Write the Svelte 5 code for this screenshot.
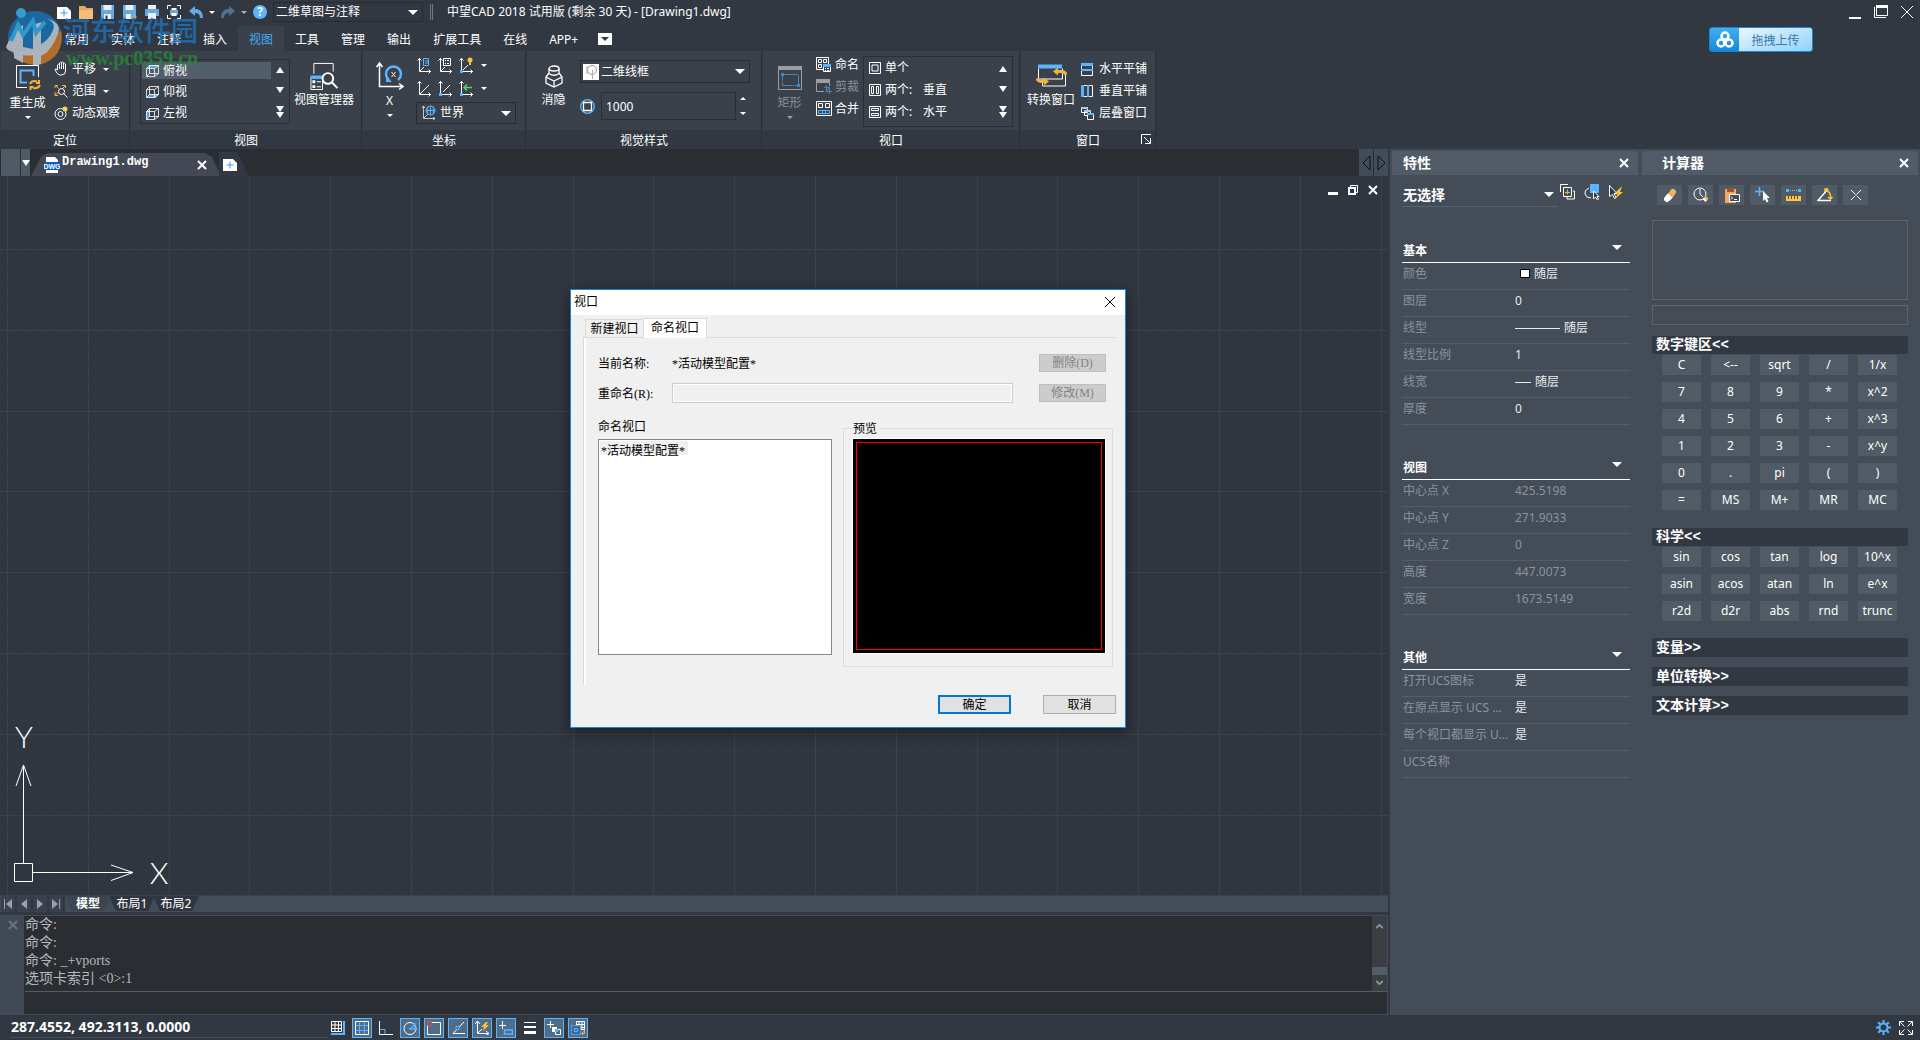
<script>
	const quick = ['new', 'open', 'save', 'saveAs', 'print', 'preview'];
	const menus = ['常用', '实体', '注释', '插入', '视图', '工具', '管理', '输出', '扩展工具', '在线', 'APP+'];
	let menu = $state('视图');

	const views = [
		['俯视', 'cubeTop'],
		['仰视', 'cubeBottom'],
		['左视', 'cubeLeft']
	];
	let view = $state('俯视');

	const layouts = [
		['单个', '', 'one'],
		['两个:', '垂直', 'twoV'],
		['两个:', '水平', 'twoH']
	];

	const groups = [
		{
			title: '基本',
			rows: [
				['颜色', '随层', 'swatch'],
				['图层', '0'],
				['线型', '随层', 'long'],
				['线型比例', '1'],
				['线宽', '随层', 'short'],
				['厚度', '0']
			]
		},
		{
			title: '视图',
			muted: true,
			rows: [
				['中心点 X', '425.5198'],
				['中心点 Y', '271.9033'],
				['中心点 Z', '0'],
				['高度', '447.0073'],
				['宽度', '1673.5149']
			]
		},
		{
			title: '其他',
			rows: [
				['打开UCS图标', '是'],
				['在原点显示 UCS ...', '是'],
				['每个视口都显示 U...', '是'],
				['UCS名称', '']
			]
		}
	];

	const calcTools = [
		['eraser', '清除'],
		['history', '清除历史'],
		['paste', '粘贴到命令行'],
		['pick', '获取坐标'],
		['ruler', '两点距离'],
		['angle', '两点角度'],
		['cross', '交点']
	];
	const numKeys = ['C', '<--', 'sqrt', '/', '1/x', '7', '8', '9', '*', 'x^2', '4', '5', '6', '+', 'x^3',
		'1', '2', '3', '-', 'x^y', '0', '.', 'pi', '(', ')', '=', 'MS', 'M+', 'MR', 'MC'];
	const sciKeys = ['sin', 'cos', 'tan', 'log', '10^x', 'asin', 'acos', 'atan', 'ln', 'e^x', 'r2d', 'd2r', 'abs', 'rnd', 'trunc'];

	const log = ['命令:', '命令:', '命令: _+vports', '选项卡索引 <0>:1'];

	const modes = [
		['snap', '捕捉', false],
		['grid', '栅格', true],
		['ortho', '正交', false],
		['polar', '极轴', true],
		['osnap', '对象捕捉', true],
		['otrack', '对象追踪', true],
		['ducs', '动态UCS', true],
		['dyn', '动态输入', true],
		['lwt', '线宽', false],
		['cycle', '循环选择', true],
		['space', '模型空间', true]
	];

	// major grid lines; four faint ones stand between each pair
	const step = 80.8;
	const lines = Array.from({ length: 200 }, (_, i) => ({
		at: Math.round((i - 5) * (step / 5)) + 0.5,
		major: i % 5 === 0
	}));

	const axes = '<path d="M3.5 1v13.5H15M1.5 3.5l2-2 2 2M12.5 12.5l2 2-2 2"/>';
	const w = 'stroke="#fff" fill="none"';
	const b = 'stroke="#5ab4ff" fill="none"';
	const y = 'stroke="#f0b43c" fill="none"';

	const icons = {
		new: '<path fill="#fff" d="M0 3h10l4 4v8H0z"/><path d="M7 5.500v7M3.500 9h7" stroke="#3a9be8"/>',
		open: '<path fill="#e6a95c" d="M0 2h6l1.500 2H14v11H0z"/><path fill="#f6bd78" d="M0 6h14v9H0z"/>',
		save: '<path fill="#66a8e0" d="M0 1h13v14H0z"/><path fill="#e8f1fa" d="M2.500 1h8v5h-8zM3 10h7v5H3z"/><path fill="#323842" d="M4.500 11.500h2V15h-2z"/>',
		saveAs: '<path fill="#66a8e0" d="M0 1h13v14H0z"/><path fill="#e8f1fa" d="M2.500 1h8v5h-8zM3 10h5v5H3z"/><path d="M7 13h6M11 11l2.500 2-2.500 2" stroke="#e8b04a" fill="none"/>',
		print: '<path fill="#e8f1fa" d="M3 1h8v4H3zM3 9h8v6H3z"/><path fill="#66a8e0" d="M0 5h14v7h-3V9H3v3H0z"/>',
		preview: `<path ${w} d="M.5 5V1.500H4M10 1.500h3.500V5M13.500 11v3.500H10M4 14.500H.5V11"/><path fill="#66a8e0" d="M3 6h8v5H3z"/><path fill="#fff" d="M4.500 4h5v2h-5zM4.500 9h5v3h-5z"/>`,
		undo: '<path fill="#66a8e0" d="M0 7l6-5v3q8 0 8 9h-3q0-5-5-5v3z"/>',
		redo: '<path fill="#4e7194" d="M14 7L8 2v3Q0 5 0 14h3q0-5 5-5v3z"/>',
		regen: `<path ${w} d="M12 23.500H1.500V1.500h22V13"/><path ${b} stroke-width="2" d="M12 18.500H5.500v-12h13V12"/><path ${y} stroke-width="2" d="M15 20q2-4 7-2.500M24 16v3h-3M25 21q-2 4-7 3M15.500 26v-3h3"/>`,
		pan: `<path ${w} d="M3.500 9V4q1-1.500 2 0V2q1-1.500 2 0v-.5q1-1.500 2 0V3q1-1.500 2 0v7q0 4-4 4H6q-2 0-3-2L.8 8.500q1-1.500 2.700.5M5.500 4v4M7.500 2v6M9.500 3v5"/>`,
		extents: `<path ${y} d="M1 4V1.500h3M1.500 1.500l3 3M8 1.500h3.500V4M11 2L8 5M1 8v3.500h3M1.500 11l3-3"/><circle cx="7.500" cy="7.500" r="3" ${w}/><path ${w} d="M9.500 9.500l4 4"/>`,
		orbit: `<circle cx="6.500" cy="8" r="5.500" ${w}/><circle cx="6.500" cy="8" r="2.500" ${w}/><circle cx="11" cy="3" r="2.500" fill="#f3d46b"/>`,
		cubeTop: `<path fill="#5a9fdc" d="M4 1h9l-3 3H1z"/><path ${w} stroke-opacity=".8" d="M.5 4.500h8v8h-8zM3.500 1.500h9v8h-9zM.5 4.500l3-3M8.500 4.500l4-3M.5 12.500l3-3M8.500 12.500l4-3"/>`,
		cubeBottom: `<path fill="#5a9fdc" d="M3 9h10l-3 4H1z"/><path ${w} stroke-opacity=".8" d="M.5 4.500h8v8h-8zM3.500 1.500h9v8h-9zM.5 4.500l3-3M8.500 4.500l4-3M.5 12.500l3-3M8.500 12.500l4-3"/>`,
		cubeLeft: `<path fill="#5a9fdc" d="M.5 4.500l3-3v8l-3 3z"/><path ${w} stroke-opacity=".8" d="M.5 4.500h8v8h-8zM3.500 1.500h9v8h-9zM.5 4.500l3-3M8.500 4.500l4-3M.5 12.500l3-3M8.500 12.500l4-3"/>`,
		viewMgr: `<path ${w} d="M4.500 12V1.500h20V10"/><path ${w} d="M1.500 16v12.500h12V16"/><path fill="#5ab4ff" d="M1 14h13v3.500H1z"/><path fill="#fff" d="M3 19h3v3H3zM3 24h3v3H3zM7.500 20H12v1H7.500zM7.500 25H12v1H7.500z"/><circle cx="19" cy="17" r="5.500" ${w} stroke-width="2"/><path d="M23 21l6 6" stroke="#fff" stroke-width="2"/>`,
		rotX: `<path ${w} stroke-width="1.500" d="M3.500 1v23.500H27M.5 5l3-4 3 4M23 21.500l4 3-4 3"/><path d="M13 18a7.500 7.500 0 1 1 9 0" stroke="#5ab4ff" stroke-width="2.500" fill="none"/><path fill="#5ab4ff" d="M10 14v6h6z"/><path d="M15.500 10l4 5M19.500 10l-4 5" stroke="#fff"/>`,
		ucs1: `<g ${w}>${axes}<path d="M4 14l4-4"/></g><path ${b} d="M7.500 1.500h5v7h-5zM9 4h3M9 6h3"/>`,
		ucs2: `<g ${w}>${axes}<path d="M4 14l4-4M6.500 1.500h7v7h-7zM8 3.500h1M10 3.500h2M8 6.500h1M10 6.500h2"/></g>`,
		ucs3: `<g ${w}>${axes}<path d="M4 14l6-6"/></g><circle cx="12" cy="3" r="2.500" fill="#f7c344"/><path fill="#f7c344" d="M11 5h2v3h-2z"/><path fill="#5ab4ff" d="M2 13h3v3H2z"/>`,
		ucs4: `<g ${w}>${axes}<path d="M4 14l9-9"/></g>`,
		ucs5: `<g ${w}>${axes}<path d="M6 12l7-7"/></g><path fill="#5ab4ff" d="M2 13h3v3H2z"/>`,
		ucs6: `<g ${w}>${axes}</g><path d="M6 7.500h8M9 4.500l-3 3 3 3" stroke="#5fd068" stroke-width="1.500" fill="none"/><path fill="#5ab4ff" d="M2 13h3v3H2z"/>`,
		globe: `<path ${w} stroke-opacity=".7" d="M2.500 1v12.500H14M1 3l1.500-2L4 3M12 12l2 1.500-2 1.500M3 13l4-4"/><circle cx="9.500" cy="5.500" r="4.500" ${b}/><path ${b} d="M5 5.500h9M9.500 1v9M7 1.500q-1 4 0 8M12 1.500q1 4 0 8"/>`,
		hide: `<ellipse cx="9" cy="3.500" rx="5" ry="2.500" ${w} stroke-width="1.300"/><path ${w} stroke-width="1.300" d="M4 3.500v5q5 3.500 10 0v-5M4 8l-3 4v6l8 4 8-4v-6l-3-4M1 12l8 4 8-4M9 16v6"/>`,
		frame: '<path fill="#fff" d="M0 0h16v16H0z"/><circle cx="9" cy="6" r="4.500" stroke="#999" fill="none"/><path d="M9.500 6v9M4 2v8" stroke="#aaa"/>',
		facet: `<circle cx="7.500" cy="7.500" r="6.800" ${b} stroke-width="1.300"/><path ${w} stroke-width="1.300" d="M3.500 3.500h8v8h-8z"/>`,
		rect: '<path stroke="#9a9ea4" fill="none" d="M.5 1.500h23v22H.5z"/><path fill="#9a9ea4" d="M0 0h24v4H0z"/><path stroke="#4a83b5" fill="none" stroke-dasharray="15 1" d="M4.500 8.500h16v11h-16z"/><path fill="#4a83b5" d="M3 7h3v3H3zM19 18h3v3h-3z"/>',
		vpName: `<path ${w} d="M.5 .5h12v12H.5zM2.500 2.500h3v3h-3zM7.500 2.500h3v3h-3zM2.500 7.500h3v3h-3z"/><path fill="#3a414a" d="M7 7h9v9H7z"/><path ${w} d="M7.500 7.500h7v7h-7z"/><path fill="#5ab4ff" d="M7 7h8v3H7z"/><path fill="#fff" d="M9 11h1v1H9zM11 11h2v1h-2zM9 13h1v1H9zM11 13h2v1h-2z"/>`,
		vpClip: '<path stroke="#9a9ea4" fill="none" d="M.5 1.500h13V7M.5 1.500v11H8"/><path fill="#9a9ea4" d="M0 0h14v4H0z"/><path stroke="#4a83b5" fill="none" d="M10.500 6v6.500H16M8 8.500h5.500V15M9 14l5-6"/>',
		vpJoin: `<path ${w} d="M.5 .5h15v14H.5zM2.500 2.500h4v4h-4zM9.500 2.500h4v4h-4z"/><path ${b} d="M2.500 9.500h11v3h-11zM6.500 9v4M9.500 9v4"/>`,
		one: `<path ${w} d="M.5 .5h11v11H.5zM3 3h6v6H3z"/>`,
		twoV: `<path ${w} d="M.5 .5h11v11H.5zM2.500 2.500h2v7h-2zM7.500 2.500h2v7h-2z"/>`,
		twoH: `<path ${w} d="M.5 .5h11v11H.5zM2.500 2.500h7v2h-7zM2.500 7.500h7v2h-7z"/>`,
		swap: `<path ${w} d="M2.500 4v10.500h24V4M6.500 15v6.500h23V9"/><path fill="#5ab4ff" d="M2 0h24v4H2z"/><path d="M20 7h5q4 0 5 3" stroke="#f0b43c" stroke-width="3" fill="none"/><path fill="#f0b43c" d="M17 7l5-4v8z"/><path d="M10 17H6q-4 0-5-3" stroke="#f0b43c" stroke-width="3" fill="none"/><path fill="#f0b43c" d="M13 17l-5-4v8z"/>`,
		tileH: `<path ${w} d="M.5 1.500h11v11H.5z"/><path fill="#5ab4ff" d="M0 0h12v3H0zM0 6h12v2H0z"/>`,
		tileV: `<path ${w} d="M1.500 .5h10v11h-10z"/><path fill="#5ab4ff" d="M0 0h3v12H0zM6 0h2v12H6z"/>`,
		cascade: `<path ${w} d="M.5 1.500h6v4h-6zM3.500 4.500h6v4h-6z"/><path fill="#3a414a" d="M6 7h7v6H6z"/><path ${w} d="M6.500 7.500h6v5h-6z"/><path fill="#a5cdf0" d="M0 0h7v2H0zM3 3h7v2H3z"/><path fill="#5ab4ff" d="M6 6h7v2H6z"/>`,
		launcher: `<path ${w} d="M.5 10V.5H10M3 3l6 6M9.500 4v5.500H4"/>`,
		quickSel: `<path ${w} d="M.5 8V.5H8M3.500 3.500h8v9h-8zM13 7h1.500v8H7v-2"/><path ${y} d="M7.500 5.500v5M5 8.500h5"/>`,
		selObj: `<path fill="#5ab4ff" d="M6 0h9v9H6z"/><path ${w} d="M5 4q-5 2-4 6t6 4"/><path fill="#323842" stroke="#fff" d="M9.500 7v8l2-2 2 3 1-1-1.500-2.500h2z"/>`,
		toggle: `<path fill="#323842" stroke="#fff" d="M1.500 1.500v11l3-2 2 4 1.500-1-2-4h3z"/><path fill="#ffc52e" d="M14 2L7 9h3l-3 6 8-7h-3z"/>`,
		eraser: '<path d="M5 12l3-3" stroke="#fff" stroke-width="6" stroke-linecap="round"/><path d="M8 9l3-4" stroke="#e8b65c" stroke-width="6" stroke-linecap="round"/><path d="M5.500 11.500l2.500-3" stroke="#fff" stroke-width="6"/>',
		history: `<circle cx="7" cy="7" r="6" ${w}/><path ${w} d="M7 2v5l3 3"/><path d="M11 13.500l2-2" stroke="#fff" stroke-width="4"/><path d="M12.500 12l1.500-2" stroke="#e8b65c" stroke-width="4"/>`,
		paste: '<path fill="#f4a95e" d="M1 2h11v14H1z"/><path fill="#9a5530" d="M3 1h7v4H3z"/><path fill="#434c57" stroke="#fff" d="M5.500 7.500h10v7h-10z"/><path d="M7 9.500l1.500 1.500L7 12.500M10 12.500h3" stroke="#fff" fill="none"/>',
		pick: '<path d="M4.500 0v9M0 4.500h9" stroke="#5ab4ff" stroke-width="1.500"/><path fill="#fff" d="M8 4v10l2-2 1.500 3.500 2-1L12 11h3z"/>',
		ruler: '<path fill="#3fc0ff" d="M0 2h3v3H0zM12 2h3v3h-3z"/><path d="M4 3.500h8" stroke="#e8b65c" stroke-dasharray="1 1"/><path fill="#ffc83c" d="M0 9h15v5H0z"/><path d="M2.500 9v3M5.500 9v3M8.500 9v3M11.500 9v3" stroke="#434c57"/>',
		angle: '<path d="M11 2L1 13.500h13" stroke="#fff" stroke-width="1.500" fill="none"/><path d="M9 3q5 2 4.500 8M8 5V2h3M11 10l2.500 2 2-2" stroke="#ffc83c" stroke-width="1.500" fill="none"/>',
		cross: '<path d="M3 3l10 10M13 3L3 13" stroke="#fff"/><path fill="#5ab4ff" d="M7 7h2v2H7z"/>',
		snap: `<path ${w} d="M.5 .5h10v10H.5zM4 0v11M7.500 0v11M0 4h11M0 7.500h11"/><path d="M13 0v13H0" stroke="#5ab4ff" stroke-width="2" fill="none"/>`,
		grid: `<path ${b} d="M4.500 1v12M9.500 1v12M1 4.500h12M1 9.500h12"/><path ${w} d="M.5 .5h13v13H.5z"/>`,
		ortho: `<path ${w} d="M.5 0v13.500H14"/><path ${b} d="M1 8.500h5V13"/>`,
		polar: `<circle cx="7" cy="7.500" r="6" ${w}/><path ${b} stroke-width="1.300" d="M7 8l5-5v5H6M12 8h3"/>`,
		osnap: `<path ${w} d="M.5 1.500h13v12H.5z"/><path fill="#516c88" stroke="#e05050" d="M.5 .5h4v4h-4z"/>`,
		otrack: `<path ${w} d="M13 1L2 12.500h12"/><path fill="#516c88" stroke="#5ab4ff" d="M5 5.500h3v3H5z"/>`,
		ducs: `<path ${w} d="M2.500 0v12.500H14M0 3l2.500-3L5 3M11 10l3 2.500-3 2M3 12l4-4"/><path fill="#ffc52e" d="M11 1L6 6h3l-1 4 6-6h-3l2-3z"/>`,
		dyn: `<path ${w} d="M3.500 0v8M0 4.500h7"/><path ${b} stroke-width="1.500" d="M5.500 9h8v4h-8z"/>`,
		lwt: '<path fill="#fff" d="M1 1h12v1H1zM1 5h12v2H1zM1 10h12v3H1z"/>',
		cycle: `<path ${w} d="M3.500 0v7M0 3.500h7"/><path fill="#fff" d="M5 6h5v5H5z"/><path fill="#516c88" stroke="#fff" d="M8.500 8.500h5v5h-5z"/><path fill="#5ab4ff" d="M8 8h3v3H8z"/>`,
		space: `<path ${w} d="M5.500 .5h8v8h-8zM8 1v8M11 1v8M5 3.500h8M5 6.500h8"/><path fill="#3c6a98" stroke="#5ab4ff" stroke-dasharray="2 1" d="M.5 4.500h9v9h-9z"/><path ${b} d="M3.500 7.500h3v3h-3z"/><path ${y} d="M13.500 9v3.500H11M12.500 10.500l-2 2 2 2"/>`,
		gear: '<circle cx="7.500" cy="7.500" r="4" stroke="#5ab4ff" stroke-width="2" fill="none"/><path d="M7.500 0v3M7.500 12v3M0 7.500h3M12 7.500h3M2.200 2.200l2 2M10.800 10.800l2 2M2.200 12.800l2-2M10.800 4.200l2-2" stroke="#5ab4ff" stroke-width="2"/>',
		full: `<path ${w} d="M.5 5V.5H5M9 .5h4.500V5M13.500 9v4.500H9M5 13.500H.5V9M1 1l4.500 4.500M13 1L8.500 5.500M1 13l4.500-4.500M13 13L8.500 8.500"/>`,
		dwg: '<path fill="#fff" d="M2 0h9l3 3v13H2z"/><path fill="#0a5cc8" d="M0 5h16v8H0z"/><text x="8" y="12" font-size="7" font-weight="bold" fill="#fff" text-anchor="middle" font-family="Liberation Sans">DWG</text>'
	};
</script>

{#snippet icon(name, width = 16, height = 16)}
	<svg class="icon" {width} {height} viewBox="0 0 {width} {height}" aria-hidden="true">{@html icons[name]}</svg>
{/snippet}

{#snippet arrows(label)}
	<span class="arrows">
		<button aria-label="{label} 上"><i class="up"></i></button>
		<button aria-label="{label} 下"><i class="down"></i></button>
		<button aria-label="{label} 展开"><i class="down"></i><i class="down"></i></button>
	</span>
{/snippet}

<div class="app">
	<header>
		<div class="title">
			<div class="quick">
				{#each quick as name (name)}
					<button aria-label={name}>{@render icon(name, 14)}</button>
				{/each}
				<button aria-label="undo">{@render icon('undo', 14)}</button>
				<button class="drop" aria-label="undo list"><i class="small"></i></button>
				<button aria-label="redo">{@render icon('redo', 14)}</button>
				<button class="drop dim" aria-label="redo list"><i class="small"></i></button>
				<button class="help" aria-label="help">?</button>
			</div>
			<span class="combo space">
				<select aria-label="工作空间"><option>二维草图与注释</option></select><i class="down"></i>
			</span>
			<span class="grip"></span>
			<h1>中望CAD 2018 试用版 (剩余 30 天) - [Drawing1.dwg]</h1>
			<div class="win">
				<button aria-label="最小化"><svg width="14" height="14"><path fill="#fff" d="M1 12h12v2H1z" /></svg></button>
				<button aria-label="还原"><svg width="14" height="14"><path fill="none" stroke="#fff" d="M2.500.5h11v10h-11zM.5 2v10.500H12" /><path fill="#fff" d="M2 0h12v3H2z" /></svg></button>
				<button aria-label="关闭"><svg width="14" height="14"><path stroke="#fff" d="M1 1l12 12M13 1L1 13" /></svg></button>
			</div>
		</div>

		<nav>
			{#each menus as m (m)}
				<button class:on={menu === m} onclick={() => (menu = m)}>{m}</button>
			{/each}
			<button class="fold" aria-label="折叠功能区"><i class="down"></i></button>
		</nav>

		<div class="ribbon">
			<section class="locate">
				<div class="tools">
					<button class="big low">{@render icon('regen', 26, 28)}<span>重生成</span><i class="small"></i></button>
					<div class="stack">
						<button>{@render icon('pan', 14, 16)}平移<i class="small"></i></button>
						<button>{@render icon('extents', 14, 14)}范围<i class="small"></i></button>
						<button>{@render icon('orbit', 14, 14)}动态观察</button>
					</div>
				</div>
				<h2>定位</h2>
			</section>

			<section class="views">
				<div class="tools">
					<div class="gallery">
						<div class="items">
							{#each views as [name, ico] (name)}
								<button class:on={view === name} onclick={() => (view = name)}>{@render icon(ico, 13, 13)}{name}</button>
							{/each}
						</div>
						{@render arrows('视图')}
					</div>
					<button class="big">{@render icon('viewMgr', 30, 30)}<span>视图管理器</span></button>
				</div>
				<h2>视图</h2>
			</section>

			<section class="coords">
				<div class="tools">
					<button class="big low">{@render icon('rotX', 28, 28)}<span>X</span><i class="small"></i></button>
					<div class="ucs">
						<div class="ucsgrid">
							{#each [1, 2, 3] as n (n)}<button aria-label="UCS {n}">{@render icon('ucs' + n, 16, 17)}</button>{/each}
							<button aria-label="更多 UCS"><i class="small"></i></button>
							{#each [4, 5, 6] as n (n)}<button aria-label="UCS {n}">{@render icon('ucs' + n, 16, 17)}</button>{/each}
							<button aria-label="更多 UCS 选项"><i class="small"></i></button>
						</div>
						<span class="combo world">
							{@render icon('globe', 15)}
							<select aria-label="坐标系"><option>世界</option></select><i class="down"></i>
						</span>
					</div>
				</div>
				<h2>坐标</h2>
			</section>

			<section class="style">
				<div class="tools">
					<button class="big">{@render icon('hide', 18, 24)}<span>消隐</span></button>
					<div class="visual">
						<span class="combo wire">
							{@render icon('frame')}
							<select aria-label="视觉样式"><option>二维线框</option></select><i class="down"></i>
						</span>
						<div class="facets">
							{@render icon('facet', 15, 15)}
							<input aria-label="平滑度" value="1000" />
							<span class="spin">
								<button aria-label="增加"><i class="small flip"></i></button>
								<button aria-label="减少"><i class="small"></i></button>
							</span>
						</div>
					</div>
				</div>
				<h2>视觉样式</h2>
			</section>

			<section class="vports">
				<div class="tools">
					<button class="big low" disabled>{@render icon('rect', 24, 24)}<span>矩形</span><i class="small"></i></button>
					<div class="stack">
						<button>{@render icon('vpName')}命名</button>
						<button disabled>{@render icon('vpClip')}剪裁</button>
						<button>{@render icon('vpJoin')}合并</button>
					</div>
					<div class="gallery">
						<div class="items">
							{#each layouts as [a, c, ico] (ico)}
								<button>{@render icon(ico, 12, 12)}<span class="first">{a}</span>{c}</button>
							{/each}
						</div>
						{@render arrows('视口')}
					</div>
				</div>
				<h2>视口</h2>
			</section>

			<section class="windows">
				<div class="tools">
					<button class="big">{@render icon('swap', 31, 24)}<span>转换窗口</span></button>
					<div class="stack">
						<button>{@render icon('tileH', 13, 13)}水平平铺</button>
						<button>{@render icon('tileV', 13, 13)}垂直平铺</button>
						<button>{@render icon('cascade', 13, 13)}层叠窗口</button>
					</div>
				</div>
				<h2>窗口</h2>
				<button class="launcher" aria-label="窗口选项">{@render icon('launcher', 11, 11)}</button>
			</section>
		</div>

		<div class="mark" aria-hidden="true">
			<svg width="60" height="60" viewBox="0 0 60 60">
				<circle cx="32" cy="31" r="27" fill="#1675b8" />
				<path fill="#d27a22" d="M8 43q24 12 50-20 4 26-19 34Q17 60 8 43z" />
				<path fill="#c9d2da" d="M3 40Q10 22 20 18v22l10 2V18l8-3v22q8-4 12-14 3-7-5-11 14 4 10 15-7 18-17 22v8q-4 2-8 1V48q-5 1-10 0v8l-9-5v-6Q4 44 3 40z" />
				<path d="M8 34l7-16 5 10 10-14 3 12 9-11" stroke="#2fb0ee" stroke-width="4" fill="none" />
				<circle cx="18" cy="6" r="5" fill="#38b6f0" />
			</svg>
			<div><b>河东软件园</b><em>www.pc0359.cn</em></div>
		</div>
		<button class="upload">
			<span class="cloud">
				<svg width="18" height="18" viewBox="0 0 18 18"><g fill="none" stroke="#fff" stroke-width="2.500"><circle cx="9" cy="5" r="3.500" /><circle cx="5" cy="12" r="3.500" /><circle cx="13" cy="12" r="3.500" /></g></svg>
			</span>
			<span class="drag">拖拽上传</span>
		</button>
	</header>

	<main>
		<div class="work">
			<div class="docs">
				<span class="stub"></span>
				<button class="stub files" aria-label="文件列表"><i class="down"></i></button>
				<div class="doc">
					{@render icon('dwg')}<span>Drawing1.dwg</span>
					<button aria-label="关闭 Drawing1.dwg"><svg width="10" height="10"><path stroke="#fff" stroke-width="2" d="M1 1l8 8M9 1L1 9" /></svg></button>
				</div>
				<button class="add" aria-label="新建图形">{@render icon('new', 14)}</button>
				<span class="scroll">
					<button aria-label="向左"><svg width="9" height="16"><path fill="none" stroke="#111" d="M8 1v14L1 8z" /></svg></button>
					<button aria-label="向右"><svg width="9" height="16"><path fill="none" stroke="#111" d="M1 1v14l7-7z" /></svg></button>
				</span>
			</div>

			<div class="canvas">
				<svg class="gridlines" aria-hidden="true">
					{#each lines as { at, major } (at)}
						<line x1={at + 7} x2={at + 7} y1="0" y2="100%" class:major />
						<line x1="0" x2="100%" y1={at + 73} y2={at + 73} class:major />
					{/each}
				</svg>
				<div class="mdi">
					<button aria-label="最小化图形"><svg width="12" height="12"><path fill="#fff" d="M1 8h10v3H1z" /></svg></button>
					<button aria-label="还原图形"><svg width="12" height="12"><path fill="none" stroke="#fff" d="M3.500 1.500h7v7h-7z" /><path fill="#2f353e" stroke="#fff" stroke-width="2" d="M2 4h6v6H2z" /></svg></button>
					<button aria-label="关闭图形"><svg width="12" height="12"><path stroke="#fff" stroke-width="2" d="M2 2l8 8M10 2L2 10" /></svg></button>
				</div>
				<svg class="axis" width="180" height="180" viewBox="0 0 180 180">
					<g fill="none" stroke="#fff">
						<path d="M14.500 147.500h18v18h-18zM23.500 147V49M16 70l7.500-21L31 70M33 156.500h100M111 149l22 7.500-22 8" />
					</g>
					<g fill="#fff" font-family="Lato" font-weight="300" font-size="30" text-anchor="middle">
						<text x="24" y="32">Y</text>
						<text x="159" y="168">X</text>
					</g>
				</svg>
			</div>

			<div class="sheets">
				<button class="nav" aria-label="第一个"><svg width="10" height="10"><path d="M1 0h1v10H1zM9 0v10L3 5z" /></svg></button>
				<button class="nav" aria-label="上一个"><svg width="10" height="10"><path d="M8 0v10L2 5z" /></svg></button>
				<button class="nav" aria-label="下一个"><svg width="10" height="10"><path d="M2 0v10l6-5z" /></svg></button>
				<button class="nav" aria-label="最后一个"><svg width="10" height="10"><path d="M8 0h1v10H8zM1 0v10l6-5z" /></svg></button>
				<button class="sheet on">模型</button>
				<button class="sheet">布局1</button>
				<button class="sheet">布局2</button>
			</div>

			<div class="command">
				<button class="shut" aria-label="关闭命令行"><svg width="10" height="10"><path stroke="#6d7480" stroke-width="2" d="M1 1l8 8M9 1L1 9" /></svg></button>
				<div class="console">
					<div class="history">
						<div class="log">{#each log as line}<p>{line}</p>{/each}</div>
						<div class="bar">
							<svg width="7" height="5"><path d="M0 4l3.500-3L7 4" /></svg>
							<span class="thumb"></span>
							<svg width="7" height="5"><path d="M0 1l3.500 3L7 1" /></svg>
						</div>
					</div>
					<input aria-label="命令行" />
				</div>
			</div>
		</div>

		<aside class="props">
			<div class="head">特性<button aria-label="关闭特性"><svg width="10" height="10"><path stroke="#fff" stroke-width="2" d="M1 1l8 8M9 1L1 9" /></svg></button></div>
			<div class="pick">
				<span class="combo"><select aria-label="选择集"><option>无选择</option></select><i class="down"></i></span>
				<button aria-label="快速选择">{@render icon('quickSel')}</button>
				<button aria-label="选择对象">{@render icon('selObj')}</button>
				<button aria-label="切换 PICKADD">{@render icon('toggle')}</button>
			</div>
			{#each groups as g (g.title)}
				<button class="group">{g.title}<i class="down"></i></button>
				<table class:muted={g.muted}>
					<tbody>
						{#each g.rows as [name, value, mark] (name)}
							<tr>
								<th scope="row">{name}</th>
								<td>{#if mark}<span class={mark}></span>{/if}{value}</td>
							</tr>
						{/each}
					</tbody>
				</table>
			{/each}
		</aside>

		<aside class="calc">
			<div class="head">计算器<button aria-label="关闭计算器"><svg width="10" height="10"><path stroke="#fff" stroke-width="2" d="M1 1l8 8M9 1L1 9" /></svg></button></div>
			<div class="calctools">
				{#each calcTools as [ico, label] (ico)}
					<button aria-label={label}>{@render icon(ico)}</button>
				{/each}
			</div>
			<div class="body">
				<textarea aria-label="计算历史" readonly></textarea>
				<input aria-label="表达式" />
				<button class="fold">数字键区&lt;&lt;</button>
				<div class="keys">{#each numKeys as k (k)}<button>{k}</button>{/each}</div>
				<button class="fold">科学&lt;&lt;</button>
				<div class="keys">{#each sciKeys as k (k)}<button>{k}</button>{/each}</div>
				<div class="more">
					<button class="fold">变量&gt;&gt;</button>
					<button class="fold">单位转换&gt;&gt;</button>
					<button class="fold">文本计算&gt;&gt;</button>
				</div>
			</div>
		</aside>
	</main>

	<footer>
		<output>287.4552, 492.3113, 0.0000</output>
		<div class="modes">
			{#each modes as [ico, label, on] (ico)}
				<button class:on aria-label={label} aria-pressed={on}>{@render icon(ico, 14, 14)}</button>
			{/each}
		</div>
		<div class="right">
			<button aria-label="设置">{@render icon('gear', 15, 15)}</button>
			<button aria-label="全屏">{@render icon('full', 14, 14)}</button>
		</div>
	</footer>

	<div class="dialog" role="dialog" aria-labelledby="dlg-title">
		<div class="caption">
			<span id="dlg-title">视口</span>
			<button aria-label="关闭"><svg width="12" height="12"><path stroke="#000" d="M1 1l10 10M11 1L1 11" /></svg></button>
		</div>
		<div class="tabs" role="tablist">
			<button role="tab" aria-selected="false">新建视口</button>
			<button role="tab" aria-selected="true" class="on">命名视口</button>
		</div>
		<div class="page" role="tabpanel">
			<div class="form">
				<span>当前名称:</span><span>*活动模型配置*</span><button disabled>删除(D)</button>
				<label for="rename">重命名(R):</label><input id="rename" disabled /><button disabled>修改(M)</button>
			</div>
			<div class="cols">
				<div class="list">
					<label for="named">命名视口</label>
					<select id="named" size="4"><option>*活动模型配置*</option></select>
				</div>
				<fieldset>
					<legend>预览</legend>
					<div class="preview"><div></div></div>
				</fieldset>
			</div>
		</div>
		<div class="actions">
			<button class="ok">确定</button>
			<button>取消</button>
		</div>
	</div>
</div>

<style>
	:global(body) {
		margin: 0;
		background: #323842;
	}
	.app {
		position: relative;
		display: flex;
		flex-direction: column;
		min-height: 100vh;
		overflow: hidden;
		background: #323842;
		color: #fff;
		font: 12px/16px 'Noto Sans', 'Noto Sans CJK SC', sans-serif;
	}
	.app * {
		box-sizing: border-box;
	}
	button,
	select,
	input,
	textarea {
		margin: 0;
		padding: 0;
		border: 0;
		border-radius: 0;
		background: none;
		color: inherit;
		font: inherit;
		outline: none;
	}
	button {
		display: flex;
		align-items: center;
		justify-content: center;
		white-space: nowrap;
	}
	svg {
		display: block;
		flex: none;
	}
	h1,
	h2,
	p {
		margin: 0;
		font: inherit;
	}
	select {
		appearance: none;
	}
	.up,
	.down,
	.small {
		flex: none;
		width: 0;
		height: 0;
		border: 4px solid transparent;
		border-top: 6px solid #fff;
		border-bottom: 0;
	}
	.combo .down,
	.group .down {
		border-width: 5px 5px 0;
	}
	.small {
		border-width: 3px 3px 0;
	}
	.up,
	.flip {
		transform: rotate(180deg);
	}

	header {
		position: relative;
	}
	.title {
		display: flex;
		align-items: center;
		height: 26px;
		padding: 0 6px 2px 57px;
	}
	.quick {
		display: flex;
		gap: 8px;
		width: 216px;
	}
	.quick .drop {
		width: 8px;
		margin: 0 -3px;
	}
	.drop.dim {
		opacity: 0.6;
	}
	.help {
		width: 14px;
		height: 14px;
		border-radius: 7px;
		background: #5ab4ff;
		font-weight: 700;
		align-self: center;
	}
	.combo {
		display: flex;
		align-items: center;
		gap: 4px;
		padding: 0 4px;
		border: 1px solid #262b32;
		height: 22px;
	}
	.combo select {
		flex: 1;
		min-width: 0;
	}
	.space {
		width: 150px;
		height: 20px;
		padding-left: 2px;
	}
	.grip {
		width: 3px;
		height: 16px;
		margin: 0 14px 0 7px;
		border: solid #70767e;
		border-width: 0 1px;
	}
	h1 {
		flex: 1;
	}
	.win {
		display: flex;
		gap: 12px;
	}
	nav {
		display: flex;
		height: 25px;
		padding-left: 54px;
	}
	nav button {
		padding: 2px 11px 0;
	}
	nav .on {
		background: #3a414a;
		color: #41aaf5;
	}
	nav .fold {
		align-self: center;
		width: 14px;
		height: 12px;
		margin-left: 9px;
		padding: 0;
		background: #fff;
	}
	nav .fold .down {
		border-width: 4px 4px 0;
		border-top-color: #323842;
	}

	.ribbon {
		display: flex;
		gap: 2px;
		padding-left: 1px;
		height: 98px;
	}
	.ribbon section {
		position: relative;
		display: flex;
		flex-direction: column;
		box-shadow: 1px 0 #2a2f37;
	}
	.locate {
		width: 128px;
	}
	.views {
		width: 230px;
	}
	.coords {
		width: 162px;
	}
	.style {
		width: 234px;
	}
	.vports {
		width: 256px;
	}
	.windows {
		width: 134px;
	}
	.tools {
		display: flex;
		height: 79px;
		background: #3a414a;
	}
	h2 {
		height: 19px;
		line-height: 21px;
		text-align: center;
	}
	.big {
		flex-direction: column;
		justify-content: flex-start;
		gap: 1px;
		padding-top: 11px;
	}
	.big .icon {
		height: 29px;
	}
	.big.low .icon {
		height: 32px;
	}
	.big .small {
		margin-top: 4px;
	}
	button:disabled {
		color: #8b9097;
	}
	button:disabled .small {
		opacity: 0.5;
	}
	.stack {
		display: flex;
		flex-direction: column;
		gap: 6px;
		padding-top: 10px;
	}
	.stack button {
		justify-content: flex-start;
		gap: 5px;
		height: 16px;
	}
	.stack .small {
		margin-left: 3px;
	}
	.locate .big {
		width: 53px;
	}
	.locate .stack button {
		gap: 4px;
	}
	.gallery {
		display: flex;
		width: 150px;
		height: 65px;
		margin: 8px 4px 0 9px;
		padding: 2px 0 1px 1px;
		border: 1px solid #2a2f37;
	}
	.items {
		flex: 1;
		display: flex;
		flex-direction: column;
		gap: 4px;
	}
	.items button {
		justify-content: flex-start;
		gap: 4px;
		height: 18px;
		padding-left: 4px;
	}
	.items .on {
		background: #525e69;
	}
	.arrows {
		display: flex;
		flex-direction: column;
		justify-content: space-between;
		width: 18px;
		padding: 5px 0 4px;
	}
	.arrows button {
		flex-direction: column;
	}
	.coords .big {
		width: 53px;
		padding-top: 9px;
	}
	.ucsgrid {
		display: grid;
		grid-template-columns: 21px 21px 21px 12px;
		row-gap: 6px;
		padding: 6px 0 5px;
	}
	.ucsgrid button {
		justify-content: flex-start;
		height: 17px;
	}
	.ucsgrid .small {
		margin-left: 2px;
	}
	.world {
		width: 100px;
	}
	.style .big {
		width: 53px;
		padding-top: 12px;
	}
	.style .big .icon {
		height: 28px;
	}
	.visual {
		padding-top: 9px;
	}
	.wire {
		width: 170px;
		height: 23px;
		gap: 2px;
		padding-left: 2px;
	}
	.facets {
		display: flex;
		align-items: center;
		margin-top: 9px;
	}
	.facets input {
		width: 135px;
		height: 28px;
		margin-left: 6px;
		padding-left: 4px;
		border: 1px solid #2a2f37;
	}
	.spin {
		display: flex;
		flex-direction: column;
		gap: 12px;
		margin-left: 4px;
	}
	.vports .big {
		width: 53px;
	}
	.vports .stack {
		padding-top: 6px;
	}
	.vports .stack button {
		gap: 3px;
	}
	.vports .gallery {
		height: 71px;
		margin: 5px 0 0 4px;
	}
	.vports .arrows {
		padding: 7px 0;
	}
	.first {
		width: 34px;
		text-align: left;
	}
	.windows .big {
		width: 60px;
	}
	.launcher {
		position: absolute;
		right: 3px;
		bottom: 4px;
	}

	.mark {
		position: absolute;
		left: 3px;
		top: 7px;
		display: flex;
		opacity: 0.8;
		pointer-events: none;
	}
	.mark div {
		display: flex;
		flex-direction: column;
		padding-top: 6px;
	}
	.mark b {
		font-size: 27px;
		font-weight: 500;
		line-height: 36px;
		color: #1b75c0;
	}
	.mark em {
		font: bold 20px/18px 'Liberation Serif', serif;
		padding-left: 3px;
		color: #268a35;
	}
	.upload {
		position: absolute;
		top: 27px;
		right: 107px;
		height: 25px;
		border: 1px solid #1d86d4;
		border-radius: 3px;
		overflow: hidden;
	}
	.cloud {
		display: flex;
		align-items: center;
		justify-content: center;
		width: 29px;
		height: 23px;
		background: linear-gradient(#43aef2, #128ade);
	}
	.drag {
		width: 73px;
		height: 23px;
		line-height: 25px;
		background: linear-gradient(160deg, #eaf6ff, #8fd2fa);
		color: #3a77a5;
	}

	main {
		flex: 1;
		display: flex;
		background: #444c58;
	}
	.work {
		flex: 1;
		min-width: 0;
		display: flex;
		flex-direction: column;
		border-right: 2px solid #323842;
		background: #323842;
	}
	.docs {
		display: flex;
		height: 27px;
		padding-left: 1px;
		background: #2a2d32;
	}
	.stub {
		width: 19px;
		margin-right: 1px;
		background: #4f5a64;
	}
	.files {
		width: 9px;
	}
	.doc {
		display: flex;
		align-items: center;
		width: 190px;
		margin-top: 4px;
		padding: 0 14px 0 13px;
		background: #444855;
		clip-path: polygon(0 100%, 10px 4px, 16px 0, 174px 0, 181px 4px, 100% 100%);
		font: bold 12px/18px 'Liberation Mono', monospace;
	}
	.doc span {
		flex: 1;
		padding: 0 0 5px 2px;
	}
	.add {
		width: 30px;
		margin: 3px 0 0 -2px;
		padding: 0 8px 0 0;
		background: #323842;
		clip-path: polygon(0 0, 18px 0, 100% 100%, 0 100%);
	}
	.scroll {
		display: flex;
		gap: 1px;
		margin-left: auto;
	}
	.scroll button {
		width: 14px;
		background: #414b59;
	}
	.canvas {
		position: relative;
		flex: 1;
		min-height: 400px;
		background: #30363f;
	}
	.gridlines {
		position: absolute;
		inset: 0;
		width: 100%;
		height: 100%;
	}
	line {
		stroke: #323841;
	}
	line.major {
		stroke: #3a424c;
	}
	.mdi {
		position: absolute;
		top: 8px;
		right: 9px;
		display: flex;
		gap: 8px;
	}
	.axis {
		position: absolute;
		left: 0;
		bottom: 0;
	}
	.sheets {
		display: flex;
		height: 16px;
		margin-bottom: 3px;
		padding-left: 1px;
		background: #444b59;
	}
	.nav {
		width: 16px;
		border-right: 2px solid #323842;
		background: #3a414c;
	}
	.nav path {
		fill: #9aa2b0;
	}
	.sheet {
		height: 15px;
		width: 46px;
		margin-right: -2px;
		background: #30363f;
		clip-path: polygon(0 0, 100% 0, 39px 100%, 7px 100%);
	}
	.sheet.on {
		background: #3e4552;
		font-weight: 700;
	}
	.command {
		display: flex;
		height: 100px;
		border: 1px solid #444c58;
		border-left: 0;
		background: #2a2d32;
	}
	.shut {
		width: 24px;
		padding: 4px 0 0 2px;
		align-items: flex-start;
		background: #414856;
	}
	.console {
		flex: 1;
		display: flex;
		flex-direction: column;
		margin-left: 1px;
	}
	.history {
		display: flex;
		height: 76px;
		border-bottom: 1px solid #555b63;
	}
	.log {
		flex: 1;
		font: 14px/18px 'Liberation Serif', 'Noto Sans CJK SC', serif;
		color: #b4b8bd;
	}
	.console input {
		flex: 1;
		font: 14px 'Liberation Serif', 'Noto Sans CJK SC', serif;
	}
	.bar {
		display: flex;
		flex-direction: column;
		align-items: center;
		width: 15px;
		padding: 8px 0 6px;
		background: #3b3f44;
	}
	.bar path {
		fill: none;
		stroke: #8a929e;
		stroke-width: 2;
	}
	.thumb {
		width: 15px;
		height: 8px;
		margin: auto 0 5px;
		background: #515d67;
	}

	aside {
		flex: none;
		padding-top: 2px;
	}
	.head {
		display: flex;
		align-items: center;
		justify-content: space-between;
		height: 24px;
		background: #505b67;
		font-size: 14px;
		font-weight: 700;
	}
	.props {
		width: 250px;
		padding-left: 2px;
		padding-right: 2px;
	}
	.props .head {
		padding: 0 9px 0 11px;
	}
	.props > :not(.head) {
		margin-left: 10px;
		width: 228px;
	}
	.pick {
		display: flex;
		align-items: center;
		gap: 8px;
		height: 33px;
	}
	.pick .combo {
		flex: none;
		width: 156px;
		height: 24px;
		margin: 7px -6px 0 0;
		padding: 0 4px 0 1px;
		border: 0;
		border-bottom: 1px solid #566270;
		font-size: 14px;
		font-weight: 700;
	}
	.group {
		justify-content: space-between;
		height: 55px;
		padding: 32px 8px 0 1px;
		border-bottom: 1px solid #fff;
		font-weight: 700;
	}
	.group .down {
		margin-bottom: 8px;
	}
	table {
		border-spacing: 0;
		table-layout: fixed;
	}
	th,
	td {
		height: 27px;
		padding: 0 0 4px;
		border-bottom: 1px solid #535d69;
		text-align: left;
	}
	th {
		width: 113px;
		padding: 0 0 4px 1px;
		color: #8b939d;
		font-weight: 400;
		white-space: nowrap;
	}
	td {
		color: #e6eaee;
	}
	.muted td {
		color: #8b939d;
	}
	.swatch {
		display: inline-block;
		width: 10px;
		height: 9px;
		margin: 0 4px 0 5px;
		border: 1px solid #000;
		background: #fff;
	}
	.long,
	.short {
		display: inline-block;
		width: 45px;
		height: 1px;
		margin-right: 4px;
		vertical-align: middle;
		background: #e6eaee;
	}
	.short {
		width: 16px;
	}
	.calc {
		width: 280px;
		padding-right: 2px;
		padding-left: 2px;
	}
	.calc .head {
		padding: 0 9px 0 20px;
	}
	.calctools {
		display: flex;
		gap: 6px;
		padding: 10px 0 15px 15px;
	}
	.calctools button {
		width: 25px;
		height: 20px;
		background: #505b65;
	}
	.body {
		padding: 0 10px;
	}
	.body textarea,
	.body input {
		display: block;
		width: 100%;
		height: 80px;
		border: 1px solid #65635f;
		resize: none;
	}
	.body input {
		height: 20px;
		margin: 5px 0 11px;
	}
	.body .fold {
		justify-content: flex-start;
		width: 100%;
		height: 18px;
		padding-left: 4px;
		background: #323842;
		font: bold 14px/18px 'Liberation Mono', 'Noto Sans CJK SC', monospace;
	}
	.keys {
		display: grid;
		grid-template-columns: repeat(5, 1fr);
		gap: 7px 10px;
		padding: 1px 11px 18px 10px;
	}
	.keys button {
		height: 20px;
		background: #505b65;
	}
	.more {
		display: flex;
		flex-direction: column;
		gap: 10px;
		margin-top: -1px;
	}
	.more .fold {
		height: 19px;
	}

	footer {
		display: flex;
		align-items: center;
		height: 25px;
		padding: 0 7px 0 10px;
	}
	output {
		width: 318px;
		padding-left: 1px;
		border-bottom: 1px solid #444c58;
		font: bold 14px/20px 'Noto Sans', sans-serif;
	}
	.modes {
		flex: 1;
		display: flex;
		gap: 4px;
	}
	.modes button {
		width: 20px;
		height: 20px;
	}
	.modes .on {
		border: 1px solid #5ab4ff;
		background: #516c88;
	}
	.right {
		display: flex;
		gap: 8px;
	}

	.dialog {
		position: absolute;
		left: 570px;
		top: 289px;
		width: 556px;
		border: 1px solid #1883d7;
		background: #f0f0f0;
		color: #000;
		box-shadow: 0 4px 14px rgb(0 0 0 / 45%);
		font: 12px/16px 'Liberation Serif', 'Noto Sans CJK SC', serif;
	}
	.caption {
		display: flex;
		align-items: center;
		justify-content: space-between;
		height: 25px;
		padding: 0 9px 2px 3px;
		background: #fff;
	}
	.tabs {
		display: flex;
		align-items: flex-end;
		height: 22px;
		margin: 0 10px 0 14px;
	}
	.tabs button {
		width: 58px;
		height: 18px;
		border: 1px solid #d9d9d9;
		border-width: 1px 0 0 1px;
	}
	.tabs .on {
		z-index: 1;
		width: 64px;
		height: 20px;
		margin-bottom: -1px;
		padding-bottom: 1px;
		border-width: 1px 1px 0;
		background: #fff;
	}
	.page {
		margin: 0 10px 0 12px;
		height: 348px;
		padding: 16px 0 0 12px;
		border: solid #d9d9d9;
		border-width: 1px 0 0 1px;
		box-shadow: inset 2px 0 #fff;
	}
	.form {
		display: grid;
		grid-template-columns: 74px 341px 26px 67px;
		grid-template-rows: 18px 20px;
		row-gap: 11px;
		align-items: center;
		padding-left: 2px;
	}
	.form span,
	.form label {
		padding-top: 2px;
	}
	.form button {
		grid-column: 4;
		height: 18px;
		border: 1px solid #bfbfbf;
		background: #ccc;
		color: #838383;
	}
	.form input {
		height: 20px;
		border: 1px solid #ccc;
		box-shadow: inset 0 0 0 1px #fff;
	}
	.cols {
		display: flex;
		gap: 11px;
		padding: 16px 0 0 2px;
	}
	.list {
		display: flex;
		flex-direction: column;
		width: 234px;
	}
	.list label {
		height: 20px;
	}
	.list select {
		height: 216px;
		border: 1px solid #828790;
		background: #fff;
		overflow: hidden;
	}
	.list option {
		width: 88px;
		min-height: 0;
		height: 14px;
		margin: 1px;
		padding: 0 1px;
		background: #f0f0f0;
		line-height: 14px;
	}
	fieldset {
		flex: none;
		width: 270px;
		height: 248px;
		margin: 0;
		padding: 1px 6px 12px 8px;
		border: 1px solid #dcdcdc;
	}
	legend {
		padding: 2px 2px 0 1px;
	}
	.preview {
		height: 216px;
		padding: 3px;
		border: 1px solid #fff;
		background: #000;
	}
	.preview div {
		height: 100%;
		border: 1px solid #f00;
	}
	.actions {
		display: flex;
		justify-content: flex-end;
		gap: 32px;
		padding: 10px 9px 13px;
	}
	.actions button {
		width: 73px;
		height: 19px;
		border: 1px solid #adadad;
		background: #e1e1e1;
	}
	.actions .ok {
		border: 2px solid #0078d7;
	}
</style>
